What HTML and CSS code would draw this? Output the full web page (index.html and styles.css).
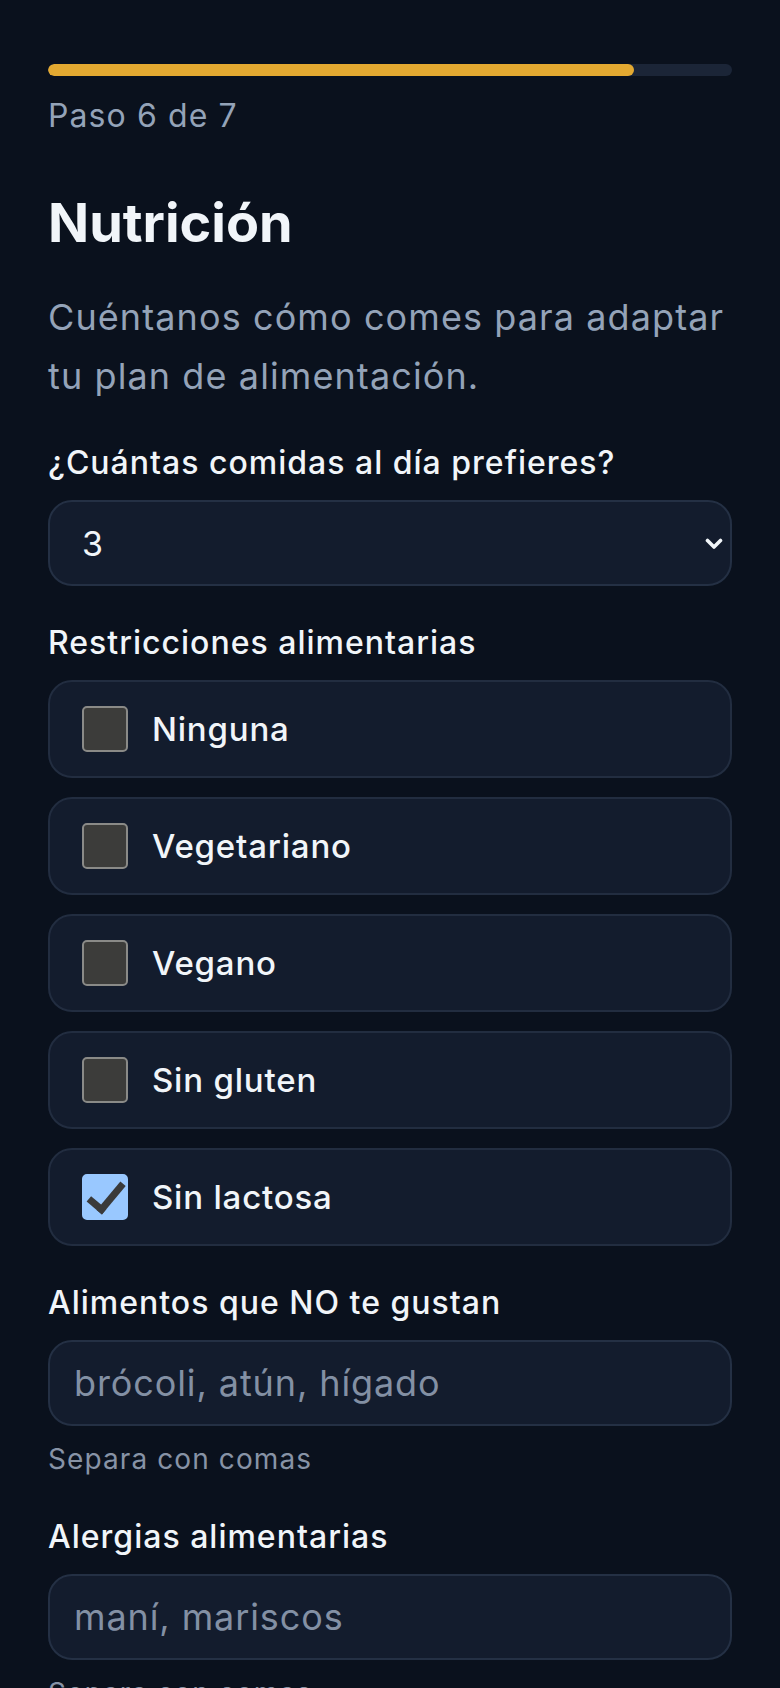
FILE: index.html
```html
<!DOCTYPE html>
<html lang="es">
<head>
    <meta charset="UTF-8">
    <meta name="viewport" content="width=device-width, initial-scale=1.0">
    <title>Nutrición</title>
    <link rel="stylesheet" href="styles.css">
</head>
<body>
    <div class="page">
        <div class="progress">
            <div class="progress-fill" style="width: 85.7%"></div>
        </div>
        <p class="step">Paso 6 de 7</p>

        <h1>Nutrición</h1>
        <p class="intro">Cuéntanos cómo comes para adaptar tu plan de alimentación.</p>

        <form id="nutritionForm">
            <div class="field">
                <label for="meals" class="field-label">¿Cuántas comidas al día prefieres?</label>
                <div class="select-wrap">
                    <select id="meals">
                        <option>2</option>
                        <option selected>3</option>
                        <option>4</option>
                        <option>5</option>
                        <option>6</option>
                    </select>
                    <!-- flecha del select -->
                    <svg class="chevron" width="18" height="12" viewBox="0 0 18 12">
                        <path d="M2.5 2.5 L9 9 L15.5 2.5" fill="none" stroke="#f1f5f9" stroke-width="3.6" stroke-linecap="round" stroke-linejoin="round"/>
                    </svg>
                </div>
            </div>

            <div class="field">
                <span class="field-label">Restricciones alimentarias</span>
                <div class="options">
                    <label class="option"><input type="checkbox" name="restriction" value="ninguna"><span>Ninguna</span></label>
                    <label class="option"><input type="checkbox" name="restriction" value="vegetariano"><span>Vegetariano</span></label>
                    <label class="option"><input type="checkbox" name="restriction" value="vegano"><span>Vegano</span></label>
                    <label class="option"><input type="checkbox" name="restriction" value="sin-gluten"><span>Sin gluten</span></label>
                    <label class="option"><input type="checkbox" name="restriction" value="sin-lactosa" checked><span>Sin lactosa</span></label>
                </div>
            </div>

            <div class="field">
                <label for="dislikes" class="field-label">Alimentos que NO te gustan</label>
                <input type="text" id="dislikes" class="text-input" placeholder="brócoli, atún, hígado">
                <p class="hint">Separa con comas</p>
            </div>

            <div class="field">
                <label for="allergies" class="field-label">Alergias alimentarias</label>
                <input type="text" id="allergies" class="text-input" placeholder="maní, mariscos">
                <p class="hint">Separa con comas</p>
            </div>
        </form>
    </div>
</body>
</html>
```

FILE: styles.css
```css
body {
    margin: 0;
    background-color: #0a111d;
    font-family: Inter, "Noto Sans", sans-serif;
    color: #f1f5f9;
}
.page {
    padding: 64px 48px 48px;
}
.progress {
    height: 12px;
    background: #1b2537;
    border-radius: 6px;
    overflow: hidden;
}
.progress-fill {
    height: 100%;
    background: #e3a931;
    border-radius: 6px;
}
.step {
    margin: 16px 0 0;
    font-size: 32px;
    line-height: 48px;
    letter-spacing: 1.1px;
    color: #94a3b8;
}
h1 {
    margin: 50px 0 0;
    font-size: 54px;
    line-height: 65px;
    font-weight: 700;
}
.intro {
    margin: 33px 0 0;
    font-size: 36px;
    line-height: 59px;
    letter-spacing: 1.1px;
    color: #94a3b8;
}
.field {
    margin-top: 34px;
}
.field-label {
    display: block;
    margin-bottom: 15px;
    font-size: 32px;
    line-height: 45px;
    font-weight: 500;
    letter-spacing: 1px;
}
.select-wrap {
    position: relative;
}
.select-wrap select,
.text-input {
    display: block;
    width: 100%;
    height: 86px;
    box-sizing: border-box; /* el borde entra en el alto */
    background: #131c2d;
    border: 2px solid #243044;
    border-radius: 24px;
    font-family: inherit;
    font-size: 34px;
    color: #f1f5f9;
    outline: none;
}
.select-wrap select {
    -webkit-appearance: none;
    appearance: none;
    padding: 0 60px 0 32px;
}
.chevron {
    position: absolute;
    right: 9px;
    top: 38px;
    pointer-events: none;
}
.text-input {
    padding: 0 24px;
    font-size: 36px;
    letter-spacing: 0.9px;
}
.text-input::placeholder {
    color: #8390a4;
}
.options {
    display: flex;
    flex-direction: column;
    gap: 19px;
}
.option {
    display: flex;
    align-items: center;
    gap: 24px;
    padding: 24px 32px;
    background: #131c2d;
    border: 2px solid #222d40;
    border-radius: 24px;
    font-size: 33px;
    font-weight: 500;
    line-height: 46px;
    letter-spacing: 0.8px;
    cursor: pointer;
}
.option input {
    -webkit-appearance: none;
    appearance: none;
    position: relative;
    flex: none;
    width: 46px;
    height: 46px;
    margin: 0;
    background: #3c3c3a;
    border: 2px solid #8a8a87;
    border-radius: 5px;
    box-sizing: border-box;
}
.option input:checked {
    background: #99c8ff;
    border-color: #99c8ff;
}
.option input:checked::after {
    content: "";
    position: absolute;
    left: 1px;
    top: 0;
    width: 13px;
    height: 30px;
    border: solid #3a3a3a;
    border-width: 0 7px 7px 0;
    transform-origin: 16.5px 33.5px;
    transform: rotate(40deg);
}
.hint {
    margin: 12px 0 0;
    font-size: 28px;
    line-height: 42px;
    letter-spacing: 1.1px;
    color: #8793a6;
}
```
